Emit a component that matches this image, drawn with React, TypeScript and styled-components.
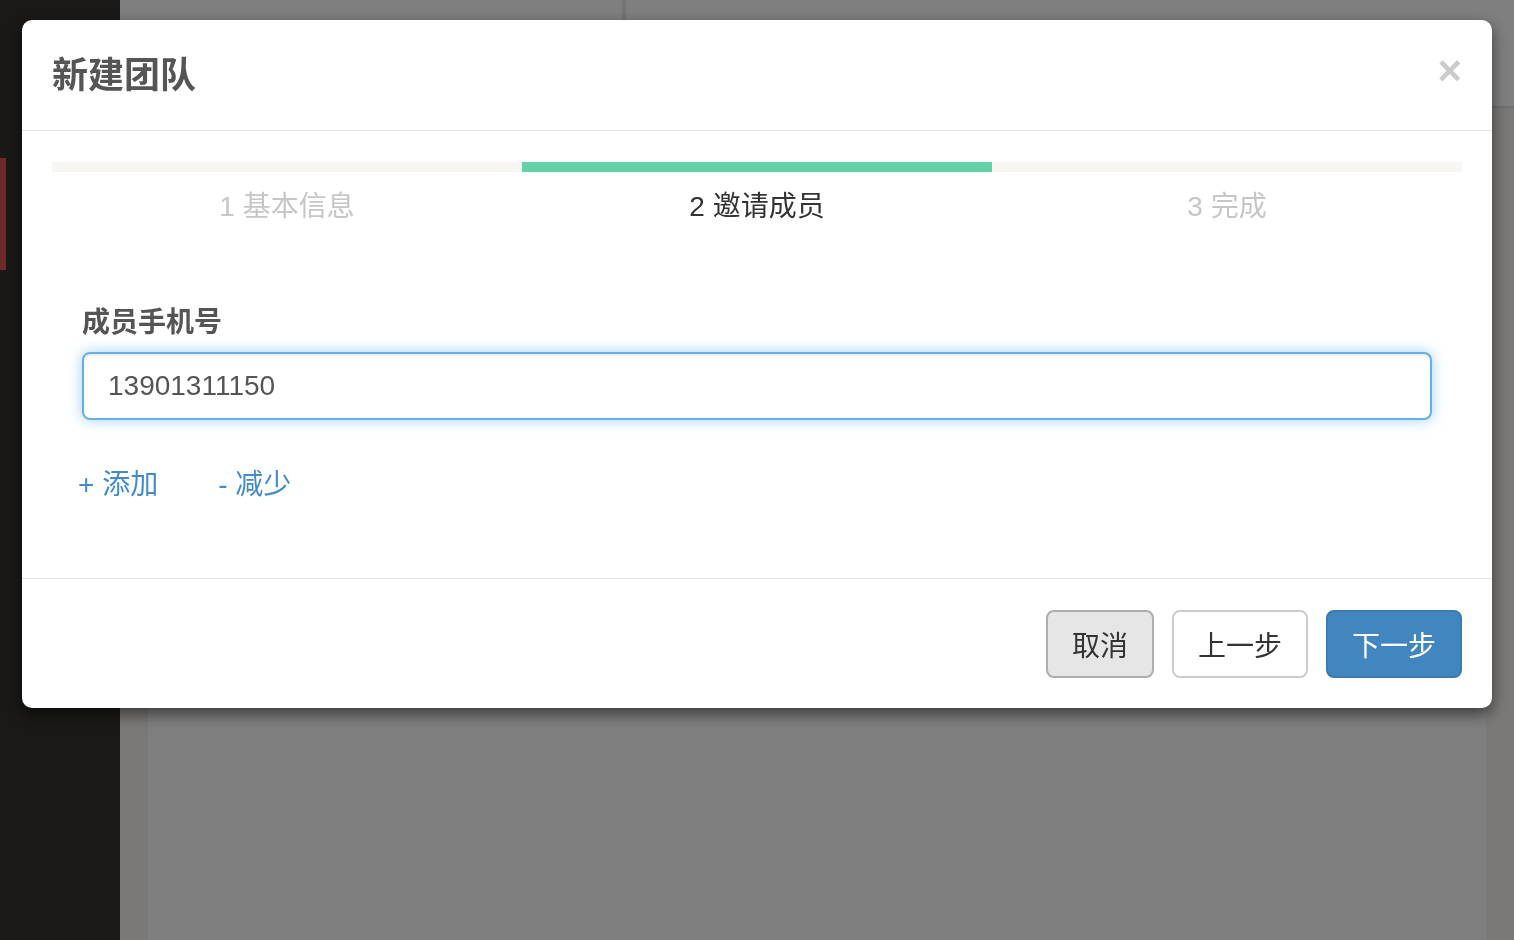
import React from "react";
import styled, { createGlobalStyle } from "styled-components";

const GlobalStyle = createGlobalStyle`
  html, body { margin: 0; padding: 0; height: 100%; }
  body {
    font-family: "Liberation Sans", "Noto Sans CJK SC", sans-serif;
    overflow: hidden;
  }
  #root { height: 100%; }
  * { box-sizing: border-box; }
`;

const Page = styled.div`
  display: flex;
  height: 940px;
  width: 1514px;
`;

const Sidebar = styled.aside`
  width: 120px;
  flex-shrink: 0;
  background: #343230;
  padding-top: 158px;
`;

const MenuItem = styled.div<{ $active?: boolean }>`
  height: 112px;
  border-left: 6px solid ${(p) => (p.$active ? "#dc5456" : "transparent")};
`;

const Main = styled.main`
  flex: 1;
  display: flex;
  flex-direction: column;
  background: #f4f2ee;
`;

const TopBar = styled.header`
  height: 108px;
  display: flex;
  background: #fefefe;
  border-bottom: 2px solid #dedede;
`;

const TopBarSection = styled.div`
  width: 506px;
  border-right: 4px solid #e8e8e8;
`;

const Content = styled.section`
  flex: 1;
  display: flex;
  padding: 20px 28px 0 28px;
`;

const Panel = styled.div`
  flex: 1;
  background: #ffffff;
`;

const Overlay = styled.div`
  position: fixed;
  inset: 0;
  background: rgba(0, 0, 0, 0.5);
`;

const Dialog = styled.div`
  position: fixed;
  top: 20px;
  left: 22px;
  width: 1470px;
  background: #ffffff;
  border-radius: 10px;
  box-shadow: 0 6px 16px rgba(0, 0, 0, 0.55);
  display: flex;
  flex-direction: column;
`;

const Header = styled.div`
  display: flex;
  justify-content: space-between;
  align-items: flex-start;
  padding: 30px 30px 29px 30px;
  border-bottom: 1px solid #e5e5e5;
`;

const Title = styled.h4`
  margin: 0;
  font-size: 36px;
  line-height: 51px;
  font-weight: 600;
  color: #555555;
`;

const Close = styled.button`
  border: 0;
  background: transparent;
  padding: 0;
  margin-top: 0;
  font-family: "Liberation Sans", sans-serif;
  font-size: 42px;
  line-height: 1;
  font-weight: 700;
  color: #000;
  opacity: 0.2;
  cursor: pointer;
`;

const Body = styled.div`
  padding: 31px 30px 30px 30px;
`;

const Steps = styled.div`
  display: grid;
  grid-template-columns: repeat(3, 1fr);
`;

const Step = styled.div`
  display: flex;
  flex-direction: column;
`;

const StepBar = styled.div<{ $active?: boolean }>`
  height: 10px;
  background: ${(p) => (p.$active ? "#63d3a7" : "#f7f6f3")};
`;

const StepLabel = styled.div<{ $active?: boolean }>`
  margin-top: 15px;
  text-align: center;
  font-size: 28px;
  line-height: 40px;
  color: ${(p) => (p.$active ? "#333333" : "#c6c6c6")};
`;

const FormGroup = styled.div`
  margin-top: 76px;
  padding: 0 30px;
  display: flex;
  flex-direction: column;
`;

const Label = styled.label`
  font-size: 28px;
  line-height: 40px;
  font-weight: 700;
  color: #555555;
  margin-bottom: 9px;
`;

const Input = styled.input`
  height: 68px;
  width: 100%;
  padding: 0 24px;
  font-family: "Liberation Sans", "Noto Sans CJK SC", sans-serif;
  font-size: 28px;
  color: #555555;
  border: 2px solid #66afe9;
  border-radius: 8px;
  outline: none;
  box-shadow: inset 0 2px 2px rgba(0, 0, 0, 0.075), 0 0 14px rgba(102, 175, 233, 0.6);
`;

const Actions = styled.div`
  display: flex;
  gap: 60px;
  margin: 45px 0 43px -4px;
`;

const LinkAction = styled.a`
  font-size: 28px;
  line-height: 40px;
  color: #428bca;
  text-decoration: none;
  cursor: pointer;
`;

const Footer = styled.div`
  display: flex;
  justify-content: flex-end;
  gap: 18px;
  padding: 31px 30px 30px 30px;
  border-top: 1px solid #e5e5e5;
`;

const Button = styled.button<{ $variant: "cancel" | "default" | "primary" }>`
  height: 68px;
  padding: 0 24px;
  font-family: "Liberation Sans", "Noto Sans CJK SC", sans-serif;
  font-size: 28px;
  border-radius: 8px;
  border: 2px solid
    ${(p) => (p.$variant === "cancel" ? "#adadad" : p.$variant === "primary" ? "#3a7cb3" : "#cccccc")};
  background: ${(p) => (p.$variant === "cancel" ? "#e6e6e6" : p.$variant === "primary" ? "#4186be" : "#ffffff")};
  color: ${(p) => (p.$variant === "primary" ? "#ffffff" : "#333333")};
  cursor: pointer;
`;

const steps = [
  { label: "1 基本信息", active: false },
  { label: "2 邀请成员", active: true },
  { label: "3 完成", active: false },
];

export default function App() {
  return (
    <>
      <GlobalStyle />
      <Page>
        <Sidebar>
          <MenuItem $active />
        </Sidebar>
        <Main>
          <TopBar>
            <TopBarSection />
          </TopBar>
          <Content>
            <Panel />
          </Content>
        </Main>
      </Page>
      <Overlay />
      <Dialog>
        <Header>
          <Title>新建团队</Title>
          <Close aria-label="关闭">×</Close>
        </Header>
        <Body>
          <Steps>
            {steps.map((s) => (
              <Step key={s.label}>
                <StepBar $active={s.active} />
                <StepLabel $active={s.active}>{s.label}</StepLabel>
              </Step>
            ))}
          </Steps>
          <FormGroup>
            <Label>成员手机号</Label>
            <Input defaultValue="13901311150" />
            <Actions>
              <LinkAction>+ 添加</LinkAction>
              <LinkAction>- 减少</LinkAction>
            </Actions>
          </FormGroup>
        </Body>
        <Footer>
          <Button $variant="cancel">取消</Button>
          <Button $variant="default">上一步</Button>
          <Button $variant="primary">下一步</Button>
        </Footer>
      </Dialog>
    </>
  );
}
